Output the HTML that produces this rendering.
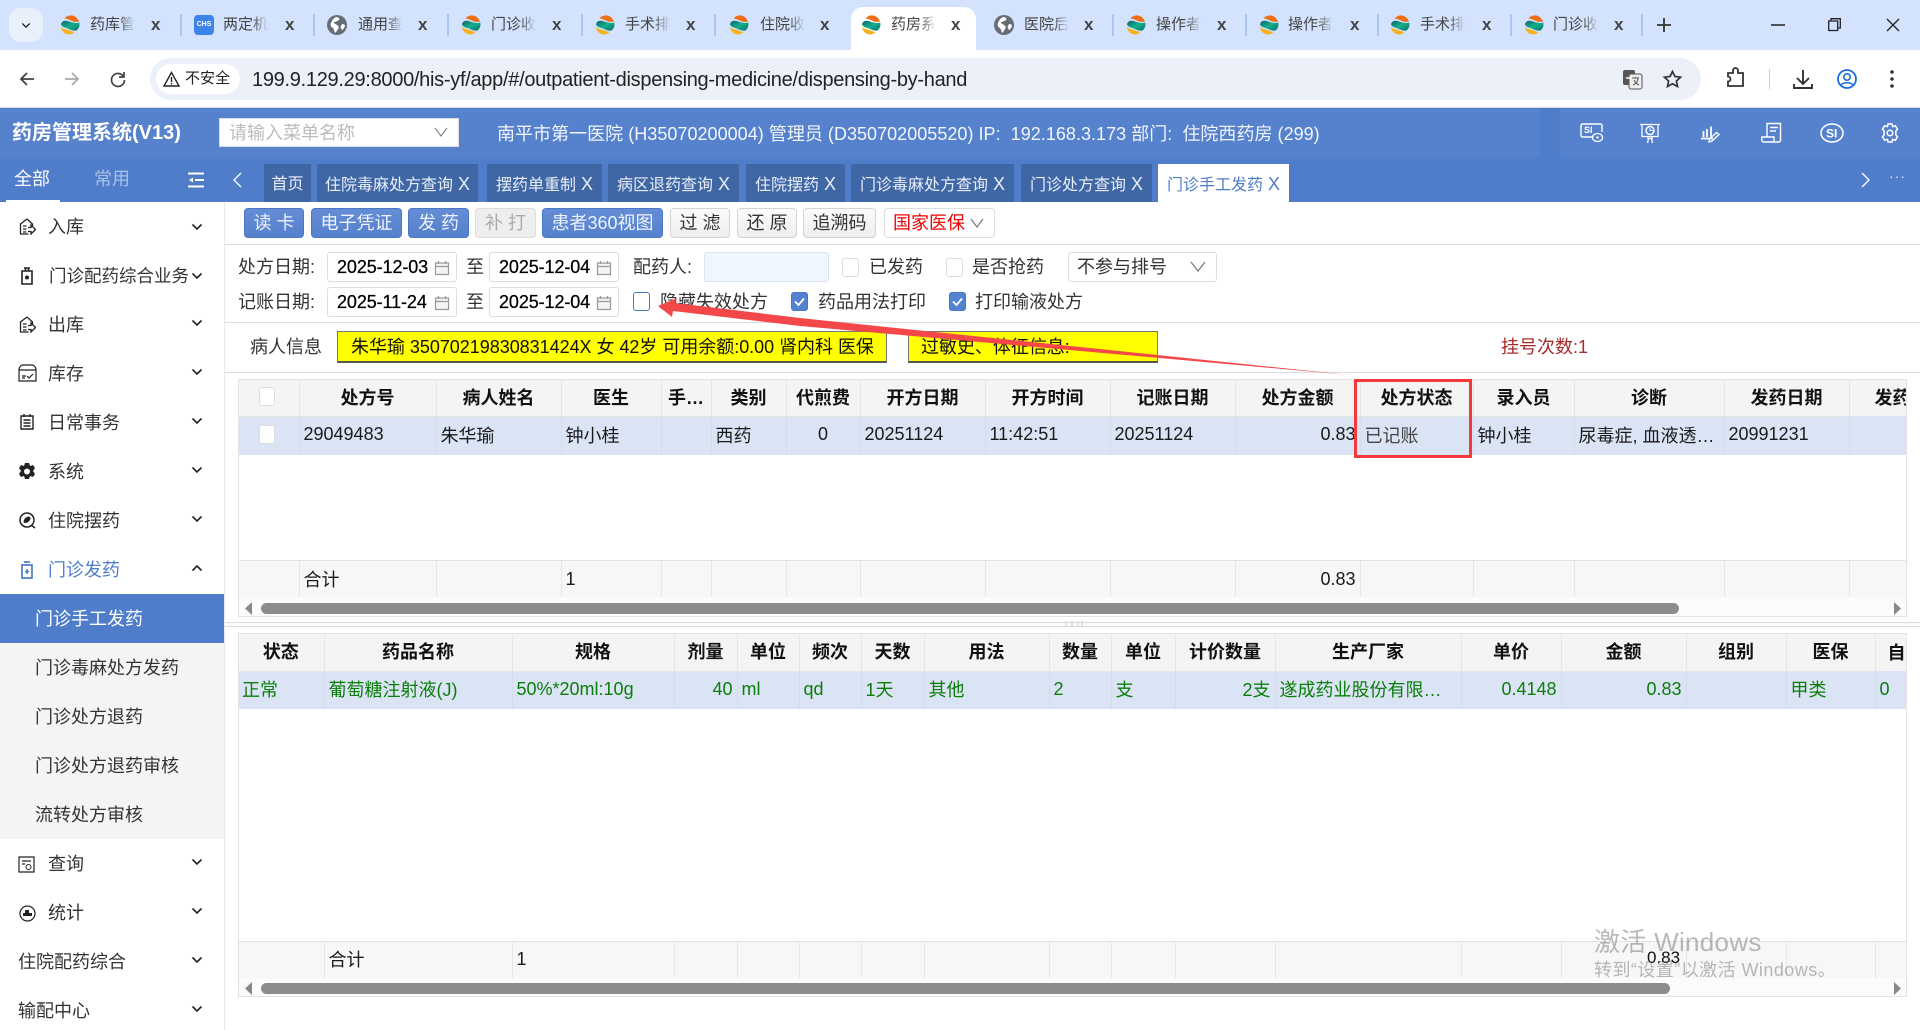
<!DOCTYPE html>
<html lang="zh-CN"><head><meta charset="utf-8"><title>药房管理系统</title>
<style>
*{box-sizing:border-box}
html,body{margin:0;width:1920px;height:1030px;overflow:hidden;background:#fff;font-family:"Liberation Sans","Noto Sans CJK SC",sans-serif;font-size:18px;color:#222}
.a{position:absolute;white-space:nowrap}
svg{display:block;overflow:visible}
.tt{font-size:15px;color:#444;width:45px;overflow:hidden;height:20px;line-height:20px;top:15px;-webkit-mask-image:linear-gradient(90deg,#000 65%,transparent)}
.tx{top:15px;font-size:17px;line-height:20px;color:#444;font-weight:700}
.sp{top:14px;width:2px;height:22px;background:#a9c6f3}
.pt{top:164px;height:38px;background:#4067a5;color:#e8eef8;font-size:16px;line-height:41px;text-align:center}
.pt i{font-style:normal;font-size:18px;margin-left:5px}
.m{left:48px;line-height:24px;height:24px;font-size:18px;color:#333}
.ch{left:191px}
.ic{left:18px}
.b{top:208px;height:30px;line-height:28px;text-align:center;border-radius:4px;font-size:18px}
.bb{background:linear-gradient(#648dd5,#5681cc);border:1px solid #4a78c6;color:#eef3fb}
.bg{background:linear-gradient(#fbfbfb,#eee);border:1px solid #d4d4d4;color:#333}
.bd{background:#eee;border:1px solid #ddd;color:#aaa}
.l{line-height:30px;height:30px;color:#333}
.d{height:30px;width:130px;border:1px solid #ddd;border-radius:3px;line-height:28px;padding-left:9px;color:#000;font-size:18px;letter-spacing:-.1px;-webkit-text-stroke:.25px #000;background:#fff}
.cal{position:absolute;right:6px;top:7px}
.cb{width:17px;height:19px;border:1px solid #ddd;border-radius:3px;background:#fff}
.cc{background:#5382cf;border-color:#4a78c6}
.y{top:331px;height:32px;background:#ff0;border:1px solid #777;border-bottom:2px solid #555;line-height:30px;color:#111;font-size:18px;padding-left:13px;letter-spacing:-.03px;overflow:hidden}
.box{border:1px solid #e3e3e3;overflow:hidden;background:#fff;left:238px;width:1669px}
table{border-collapse:collapse;table-layout:fixed;position:absolute;left:-1px;font-size:18px}
td,th{padding:0 4px;overflow:hidden;white-space:nowrap;border-right:1px solid #e6e6e6;text-overflow:ellipsis;font-weight:400;color:#1a1a1a}
th{background:#f4f4f4;font-weight:700;text-align:center;color:#111;border-bottom:1px solid #e6e6e6;padding-bottom:2px}
.r td{background:#dbe4f4;border-right-color:#d4dded;padding-bottom:2px}
.s td{background:#f7f7f7;border-top:1px solid #e2e2e2;border-bottom:1px solid #e2e2e2}
.s2 td{padding-bottom:2px}
.g td{color:#0a7d0a}
.R{text-align:right}.C{text-align:center}
th.last{text-align:left;border:0;text-overflow:clip}
.cbt{width:16px;margin-left:17px}
.bar{height:11px;background:#8c8c8c;border-radius:6px;left:22px}
.sb{background:#fbfbfb;left:0;width:1667px;height:19px}
</style></head><body>
<svg width="0" height="0" style="position:absolute"><defs>
<linearGradient id="tl" x1="0" y1="0" x2="1" y2="1"><stop offset="0" stop-color="#145f6a"/><stop offset=".5" stop-color="#12b08c"/><stop offset="1" stop-color="#0e6f70"/></linearGradient>
<symbol id="lg" viewBox="0 0 20 20"><path d="M4.500 3.500C8-1 16-1 19 6.500c-3 1-6 0-9-1.300C8 4.200 6 3.500 4.500 3.500z" fill="#ee6f18"/><path d="M1 9.500C1.500 6 5 5 8.500 6.300c4 1.500 7.500 2.200 10.700 1.200.9 3.500-.6 6.500-2.800 8-3 .6-5-.6-8-1.800C5.500 12.500 2.500 12.500 1 9.500z" fill="url(#tl)"/><path d="M.8 12c2 2 4.700 2 7.500 3 2.500 1 4.500 1.900 6.200 2C10.500 21.500 2.500 20 .8 12z" fill="#f5b21e"/></symbol>
<symbol id="gl" viewBox="0 0 20 20"><circle cx="10" cy="10" r="10" fill="#666d76"/><path d="M9 2c3 0 4 2 3 3-2 1-3 2-5 2-1 1 2 2 3 3 2 1 2 3 1 4-1 2-2 3-3 4-1-2-1-4-2-5-2-1-3-3-2-5 1-3 3-5 5-6zM15 9c2 0 3 1 3 2-1 2-2 4-3 4-1-2-2-3-1-4z" fill="#fff"/></symbol>
<symbol id="cv" viewBox="0 0 12 8"><path d="M1.500 1.500 6 6l4.500-4.500" fill="none" stroke="#222" stroke-width="1.600"/></symbol>
<symbol id="cal" viewBox="0 0 16 16"><path d="M1.500 3h13v11.500h-13z" fill="#f4f4f4" stroke="#999" stroke-width="1.200"/><path d="M1.500 6.500h13M4.500 1v3M11.500 1v3" fill="none" stroke="#999" stroke-width="1.200"/></symbol>
<symbol id="tk" viewBox="0 0 17 19"><path d="M4 9.500l3.500 3.500L13 6.500" fill="none" stroke="#fff" stroke-width="1.800"/></symbol>
<symbol id="hs" viewBox="0 0 18 17"><path d="M9 1 2.500 6v10h8M9 1l5.500 5v2M5 8h3.500M5 11h3.500M5 14h3.500" fill="none" stroke="#222" stroke-width="1.300"/><path d="M10 9.500h3V7l4.500 4.500L13 16v-2.500h-3" fill="#fff" stroke="#222" stroke-width="1.300"/></symbol>
</defs></svg>

<!-- browser tabs -->
<div class="a" style="left:0;top:0;width:1920px;height:50px;background:#d3e3fd"></div>
<div class="a" style="left:9px;top:8px;width:34px;height:34px;border-radius:12px;background:#e9f0fc"></div>
<svg class="a" style="left:21px;top:22px" width="10" height="7"><use href="#cv"/></svg>
<div class="a" style="left:851px;top:7px;width:125px;height:43px;background:#fff;border-radius:12px 12px 0 0"></div>

<svg class="a" style="left:60px;top:15px" width="20" height="20"><use href="#lg"/></svg><div class="a tt" style="left:90px">药库管理</div><div class="a tx" style="left:151px">x</div><div class="a sp" style="left:180px"></div>
<div class="a" style="left:194px;top:15px;width:20px;height:20px;background:#3c84ea;border-radius:4px;color:#fff;font:700 7px/20px 'Liberation Sans';text-align:center">CHS</div><div class="a tt" style="left:223px">两定机构</div><div class="a tx" style="left:285px">x</div><div class="a sp" style="left:313px"></div>
<svg class="a" style="left:327px;top:15px" width="20" height="20"><use href="#gl"/></svg><div class="a tt" style="left:358px">通用查询</div><div class="a tx" style="left:418px">x</div><div class="a sp" style="left:447px"></div>
<svg class="a" style="left:461px;top:15px" width="20" height="20"><use href="#lg"/></svg><div class="a tt" style="left:491px">门诊收费</div><div class="a tx" style="left:552px">x</div><div class="a sp" style="left:581px"></div>
<svg class="a" style="left:595px;top:15px" width="20" height="20"><use href="#lg"/></svg><div class="a tt" style="left:625px">手术排班</div><div class="a tx" style="left:686px">x</div><div class="a sp" style="left:714px"></div>
<svg class="a" style="left:729px;top:15px" width="20" height="20"><use href="#lg"/></svg><div class="a tt" style="left:760px">住院收费</div><div class="a tx" style="left:820px">x</div>
<svg class="a" style="left:861px;top:15px" width="20" height="20"><use href="#lg"/></svg><div class="a tt" style="left:891px">药房系统</div><div class="a tx" style="left:951px">x</div>
<svg class="a" style="left:994px;top:15px" width="20" height="20"><use href="#gl"/></svg><div class="a tt" style="left:1024px">医院后台</div><div class="a tx" style="left:1084px">x</div><div class="a sp" style="left:1112px"></div>
<svg class="a" style="left:1126px;top:15px" width="20" height="20"><use href="#lg"/></svg><div class="a tt" style="left:1156px">操作者站</div><div class="a tx" style="left:1217px">x</div><div class="a sp" style="left:1245px"></div>
<svg class="a" style="left:1259px;top:15px" width="20" height="20"><use href="#lg"/></svg><div class="a tt" style="left:1288px">操作者站</div><div class="a tx" style="left:1350px">x</div><div class="a sp" style="left:1377px"></div>
<svg class="a" style="left:1390px;top:15px" width="20" height="20"><use href="#lg"/></svg><div class="a tt" style="left:1420px">手术排班</div><div class="a tx" style="left:1482px">x</div><div class="a sp" style="left:1510px"></div>
<svg class="a" style="left:1524px;top:15px" width="20" height="20"><use href="#lg"/></svg><div class="a tt" style="left:1553px">门诊收费</div><div class="a tx" style="left:1614px">x</div><div class="a sp" style="left:1641px"></div>
<svg class="a" style="left:1657px;top:18px" width="14" height="14"><path d="M7 0v14M0 7h14" stroke="#333" stroke-width="1.800"/></svg>
<svg class="a" style="left:1771px;top:24px" width="14" height="2"><path d="M0 1h14" stroke="#222" stroke-width="1.500"/></svg>
<svg class="a" style="left:1828px;top:18px" width="13" height="13"><path d="M.7 3h9v9.500h-9zM3 3V.7h9.300V10H10" fill="none" stroke="#222" stroke-width="1.300"/></svg>
<svg class="a" style="left:1886px;top:18px" width="14" height="14"><path d="M1 1l12 12M13 1 1 13" stroke="#222" stroke-width="1.300"/></svg>

<!-- toolbar -->
<div class="a" style="left:0;top:50px;width:1920px;height:57px;background:#fff;border-radius:12px 12px 0 0"></div>
<div class="a" style="left:0;top:107px;width:1920px;height:1px;background:#d8d8d8"></div>
<svg class="a" style="left:19px;top:71px" width="16" height="16"><path d="M15 8H2M8 2 2 8l6 6" fill="none" stroke="#444" stroke-width="1.800"/></svg>
<svg class="a" style="left:64px;top:71px" width="16" height="16"><path d="M1 8h13M8 2l6 6-6 6" fill="none" stroke="#aaa" stroke-width="1.800"/></svg>
<svg class="a" style="left:110px;top:71px" width="16" height="16"><path d="M13.500 5.500A6.500 6.500 0 1 0 14.500 9M14 1v5H9" fill="none" stroke="#444" stroke-width="1.700"/></svg>
<div class="a" style="left:150px;top:58px;width:1551px;height:42px;border-radius:21px;background:#ebf0f9"></div>
<div class="a" style="left:156px;top:64px;width:84px;height:30px;border-radius:15px;background:#fff"></div>
<svg class="a" style="left:163px;top:71px" width="17" height="16"><path d="M8.500 1.500 16 15H1zM8.500 6v5M8.500 12v1.500" fill="none" stroke="#222" stroke-width="1.400"/></svg>
<div class="a" style="left:185px;top:68px;font-size:15px;line-height:22px;color:#222">不安全</div>
<div class="a" id="url" style="left:252px;top:67px;font-size:20px;line-height:26px;color:#222;letter-spacing:-.29px">199.9.129.29:8000/his-yf/app/#/outpatient-dispensing-medicine/dispensing-by-hand</div>
<svg class="a" style="left:1622px;top:69px" width="21" height="21"><rect x="1" y="1" width="12" height="15" rx="2" fill="#555"/><rect x="7" y="5" width="13" height="15" rx="2" fill="#eee" stroke="#555"/><path d="M10 9h7M13.500 8v1M11 16c3-1 5-4 5-7M12 11c1 2 3 4 5 5" stroke="#555" fill="none"/><path d="M4 9h5" stroke="#fff" stroke-width="1.500"/></svg>
<svg class="a" style="left:1663px;top:70px" width="19" height="18"><path d="M9.500 1.500l2.400 5 5.600.7-4.100 3.800 1.100 5.500-5-2.800-5 2.800 1.100-5.500L1.500 7.200l5.600-.7z" fill="none" stroke="#333" stroke-width="1.700"/></svg>
<svg class="a" style="left:1726px;top:68px" width="20" height="21"><path d="M2 5h5V2.500a2 2 0 0 1 5 0V5h5v13H2v-4.500a2.500 2.500 0 0 0 0-5z" fill="none" stroke="#333" stroke-width="1.800"/></svg>
<div class="a" style="left:1769px;top:69px;width:1px;height:20px;background:#c4d5ee"></div>
<svg class="a" style="left:1793px;top:69px" width="20" height="20"><path d="M10 1v13M4 9l6 6 6-6M1 15v4h18v-4" fill="none" stroke="#333" stroke-width="1.900"/></svg>
<svg class="a" style="left:1837px;top:69px" width="20" height="20"><circle cx="10" cy="10" r="9" fill="none" stroke="#1a6fd8" stroke-width="1.800"/><circle cx="10" cy="8" r="3.200" fill="none" stroke="#1a6fd8" stroke-width="1.600"/><path d="M4 16c2-3 10-3 12 0" fill="none" stroke="#1a6fd8" stroke-width="1.600"/></svg>
<svg class="a" style="left:1890px;top:70px" width="4" height="18"><circle cx="2" cy="2" r="1.800" fill="#333"/><circle cx="2" cy="9" r="1.800" fill="#333"/><circle cx="2" cy="16" r="1.800" fill="#333"/></svg>

<!-- app header -->
<div class="a" style="left:0;top:108px;width:1920px;height:49px;background:#5682cd"></div>
<div class="a" style="left:1540px;top:108px;width:20px;height:49px;background:#4f7dc9"></div>
<div class="a" style="left:12px;top:120px;font-size:20px;font-weight:700;color:#fff;line-height:26px">药房管理系统(V13)</div>
<div class="a" style="left:219px;top:118px;width:240px;height:29px;background:#fff;border:1px solid #ddd;font-size:18px;line-height:29px;color:#bbb;padding-left:9px">请输入菜单名称</div>
<svg class="a" style="left:434px;top:127px" width="14" height="10"><path d="M1 1l6 8 6-8" fill="none" stroke="#888" stroke-width="1.200"/></svg>
<div class="a" style="left:497px;top:121px;font-size:18px;line-height:26px;color:#f2f5fb;letter-spacing:.03px">南平市第一医院 (H35070200004) 管理员 (D350702005520) IP:&nbsp; 192.168.3.173 部门:&nbsp; 住院西药房 (299)</div>
<svg class="a" style="left:1580px;top:123px" width="24" height="21"><path d="M13 14H2.500A1.500 1.500 0 0 1 1 12.500v-10A1.500 1.500 0 0 1 2.500 1h18A1.500 1.500 0 0 1 22 2.500V9" fill="none" stroke="#fff" stroke-width="1.400"/><text x="4" y="10" font-size="9" font-weight="700" fill="#fff" font-family="Liberation Sans">SI</text><ellipse cx="17.500" cy="14.500" rx="5" ry="4" fill="#5682cd" stroke="#fff" stroke-width="1.300"/><circle cx="17.500" cy="14.500" r="1.200" fill="#fff"/></svg>
<svg class="a" style="left:1640px;top:123px" width="20" height="21"><path d="M0 1.500h20M2 1.500v12h16v-12M8 13.500h4v2H8zM7.500 20l1-4.500h3l1 4.500" fill="none" stroke="#fff" stroke-width="1.300"/><circle cx="10" cy="7.500" r="4" fill="none" stroke="#fff" stroke-width="1.500"/><path d="M10 5v2.500h3" fill="none" stroke="#fff"/></svg>
<svg class="a" style="left:1701px;top:125px" width="19" height="18"><path d="M2.500 6v6M6 4v8M10 1.500V12M0 13.500h12" fill="none" stroke="#fff" stroke-width="1.800"/><path d="M8 17l.5-3 7-6.500 2.500 2-7 6.500z" fill="none" stroke="#fff" stroke-width="1.300"/></svg>
<svg class="a" style="left:1761px;top:122px" width="20" height="21"><path d="M6 15V1.500h13.500V18c0 1.500-1 2-2 2H2.500C1.500 20 .8 19 .8 18v-3H13v5" fill="none" stroke="#fff" stroke-width="1.400"/><path d="M9 5.500h8M9 9h6" stroke="#fff" stroke-width="1.500"/></svg>
<svg class="a" style="left:1820px;top:123px" width="24" height="20"><ellipse cx="12" cy="10" rx="11" ry="9" fill="none" stroke="#fff" stroke-width="1.500"/><text x="6" y="14.500" font-size="12" font-weight="700" fill="#fff" font-family="Liberation Sans">SI</text></svg>
<svg class="a" style="left:1881px;top:123px" width="18" height="20"><path d="M7 1h4l.6 2.600 2.700-.8 2.200 3.400-1.700 2 .0 3.600 1.700 2-2.200 3.400-2.700-.8L11 19H7l-.6-2.600-2.700.8-2.200-3.400 1.700-2v-3.600l-1.700-2 2.200-3.400 2.700.8z" fill="none" stroke="#fff" stroke-width="1.500"/><circle cx="9" cy="10" r="2.800" fill="none" stroke="#fff" stroke-width="1.500"/></svg>

<!-- page tabs bar -->
<div class="a" style="left:0;top:157px;width:1920px;height:45px;background:#4f7dc9"></div>
<div class="a" style="left:14px;top:167px;font-size:18px;line-height:24px;color:#fff">全部</div>
<div class="a" style="left:94px;top:167px;font-size:18px;line-height:24px;color:#a8c1e8">常用</div>
<div class="a" style="left:6px;top:200px;width:54px;height:2px;background:#fff"></div>
<svg class="a" style="left:188px;top:172px" width="16" height="16"><path d="M0 1.500h16M7 8h9M0 14.500h16" stroke="#fff" stroke-width="2"/><path d="M5 5.500v5L1 8z" fill="#fff"/></svg>
<svg class="a" style="left:232px;top:172px" width="10" height="16"><path d="M9 1 2 8l7 7" fill="none" stroke="#fff" stroke-width="1.300"/></svg>
<div class="a pt" style="left:264px;width:47px">首页</div>
<div class="a pt" style="left:317px;width:161px">住院毒麻处方查询<i>X</i></div>
<div class="a pt" style="left:487px;width:115px">摆药单重制<i>X</i></div>
<div class="a pt" style="left:608px;width:131px">病区退药查询<i>X</i></div>
<div class="a pt" style="left:746px;width:99px">住院摆药<i>X</i></div>
<div class="a pt" style="left:851px;width:163px">门诊毒麻处方查询<i>X</i></div>
<div class="a pt" style="left:1021px;width:131px">门诊处方查询<i>X</i></div>
<div class="a pt" style="left:1158px;width:131px;background:#fff;color:#4f7dc9">门诊手工发药<i>X</i></div>
<svg class="a" style="left:1861px;top:172px" width="10" height="16"><path d="M1 1l7 7-7 7" fill="none" stroke="#fff" stroke-width="1.300"/></svg>
<div class="a" style="left:1889px;top:166px;font-size:14px;line-height:20px;color:#dfe8f6;letter-spacing:1px">···</div>

<!-- sidebar -->
<div class="a" style="left:0;top:202px;width:225px;height:828px;background:#fff;border-right:1px solid #e8e8e8"></div>
<div class="a" style="left:0;top:594px;width:224px;height:245px;background:#f4f4f4"></div>
<div class="a" style="left:0;top:594px;width:224px;height:49px;background:#4f7dc9"></div>

<svg class="a ic" style="top:218px" width="18" height="17"><use href="#hs"/></svg><div class="a m" style="top:215px">入库</div><svg class="a ch" style="top:223px" width="12" height="8"><use href="#cv"/></svg>
<svg class="a ic" style="top:267px;left:20px" width="14" height="18"><path d="M4 1h6M5.500 1v3M8.500 1v3M2 4h10v13H2z" fill="none" stroke="#222" stroke-width="1.600"/><circle cx="7" cy="10.500" r="2" fill="#222"/></svg><div class="a m" style="top:264px;left:49px;font-size:17.500px">门诊配药综合业务</div><svg class="a ch" style="top:272px" width="12" height="8"><use href="#cv"/></svg>
<svg class="a ic" style="top:316px" width="18" height="17"><use href="#hs"/></svg><div class="a m" style="top:313px">出库</div><svg class="a ch" style="top:319px" width="12" height="8"><use href="#cv"/></svg>
<svg class="a ic" style="top:364px" width="19" height="18"><path d="M1 6c0-3 2-5 4-5h9c2 0 4 2 4 5v11H1zM1 6h17M4 12h4M4 14h3M9 12l2 2 4-4" fill="none" stroke="#222" stroke-width="1.200"/></svg><div class="a m" style="top:362px">库存</div><svg class="a ch" style="top:368px" width="12" height="8"><use href="#cv"/></svg>
<svg class="a ic" style="top:414px;left:20px" width="14" height="16"><path d="M1 2h12v13H1zM4 0v3M10 0v3M3.500 6h7M3.500 9h7M3.500 12h7" fill="none" stroke="#222" stroke-width="1.400"/></svg><div class="a m" style="top:411px">日常事务</div><svg class="a ch" style="top:417px" width="12" height="8"><use href="#cv"/></svg>
<svg class="a ic" style="top:463px" width="18" height="17"><path d="M7 0h4l1 3 3-1 2 3-2 3 2 3-2 3-3-1-1 3H7l-1-3-3 1-2-3 2-3-2-3 2-3 3 1z" fill="#222"/><circle cx="9" cy="8.500" r="3" fill="#fff"/></svg><div class="a m" style="top:460px">系统</div><svg class="a ch" style="top:466px" width="12" height="8"><use href="#cv"/></svg>
<svg class="a ic" style="top:512px;left:19px" width="17" height="17"><circle cx="8" cy="8" r="7" fill="none" stroke="#222" stroke-width="1.500"/><path d="M4.500 10c0-3 3-5.500 5-5.500 2 0 2.500 2 1.500 3.500-1 1.500-3 3-4.500 3-1 0-2-.5-2-1z" fill="#222"/><path d="M12 13l4 3" stroke="#222" stroke-width="1.500"/></svg><div class="a m" style="top:509px">住院摆药</div><svg class="a ch" style="top:515px" width="12" height="8"><use href="#cv"/></svg>
<svg class="a ic" style="top:561px;left:20px" width="14" height="18"><path d="M4 1h6M2 4h10v13H2z" fill="none" stroke="#4f7dc9" stroke-width="1.700"/><path d="M7 8v5M5 10.500h4" stroke="#4f7dc9" stroke-width="1.500"/></svg><div class="a m" style="top:558px;color:#4f7dc9">门诊发药</div><svg class="a ch" style="top:564px;transform:scaleY(-1)" width="12" height="8"><use href="#cv"/></svg>
<div class="a m" style="top:607px;left:35px;color:#fff">门诊手工发药</div>
<div class="a m" style="top:656px;left:35px">门诊毒麻处方发药</div>
<div class="a m" style="top:705px;left:35px">门诊处方退药</div>
<div class="a m" style="top:754px;left:35px">门诊处方退药审核</div>
<div class="a m" style="top:803px;left:35px">流转处方审核</div>
<svg class="a ic" style="top:856px" width="17" height="17"><path d="M1 1h15v15H1zM4 5h9M4 8h3" fill="none" stroke="#222" stroke-width="1.200"/><circle cx="10.500" cy="11" r="2.500" fill="none" stroke="#222"/></svg><div class="a m" style="top:852px">查询</div><svg class="a ch" style="top:858px" width="12" height="8"><use href="#cv"/></svg>
<svg class="a ic" style="top:905px;left:19px" width="17" height="17"><circle cx="8.500" cy="8.500" r="7.500" fill="none" stroke="#222" stroke-width="1.200"/><path d="M4 11V8h2V5h4v3h3v3z" fill="#222"/></svg><div class="a m" style="top:901px">统计</div><svg class="a ch" style="top:907px" width="12" height="8"><use href="#cv"/></svg>
<div class="a m" style="top:950px;left:18px">住院配药综合</div><svg class="a ch" style="top:956px" width="12" height="8"><use href="#cv"/></svg>
<div class="a m" style="top:999px;left:18px">输配中心</div><svg class="a ch" style="top:1005px" width="12" height="8"><use href="#cv"/></svg>

<!-- action buttons -->
<div class="a b bb" style="left:244px;width:60px">读 卡</div>
<div class="a b bb" style="left:311px;width:91px">电子凭证</div>
<div class="a b bb" style="left:408px;width:61px">发 药</div>
<div class="a b bd" style="left:475px;width:61px">补 打</div>
<div class="a b bb" style="left:542px;width:121px">患者360视图</div>
<div class="a b bg" style="left:670px;width:60px">过 滤</div>
<div class="a b bg" style="left:737px;width:60px">还 原</div>
<div class="a b bg" style="left:803px;width:73px">追溯码</div>
<div class="a b" style="left:884px;width:111px;background:#fff;border:1px solid #ddd;color:#e00;text-align:left;padding-left:8px">国家医保</div>
<svg class="a" style="left:970px;top:218px" width="14" height="10"><path d="M1 1l6 8 6-8" fill="none" stroke="#777" stroke-width="1.200"/></svg>
<div class="a" style="left:225px;top:244px;width:1695px;height:1px;background:#ddd"></div>

<!-- filters -->
<div class="a l" style="left:238px;top:252px">处方日期:</div>
<div class="a d" style="left:327px;top:252px">2025-12-03<svg class="cal" width="16" height="16"><use href="#cal"/></svg></div>
<div class="a l" style="left:466px;top:252px">至</div>
<div class="a d" style="left:489px;top:252px">2025-12-04<svg class="cal" width="16" height="16"><use href="#cal"/></svg></div>
<div class="a l" style="left:633px;top:252px">配药人:</div>
<div class="a" style="left:704px;top:252px;width:125px;height:30px;background:#eff6ff;border:1px solid #dbe3ee;border-radius:3px"></div>
<div class="a cb" style="left:842px;top:258px"></div><div class="a l" style="left:869px;top:252px">已发药</div>
<div class="a cb" style="left:946px;top:258px"></div><div class="a l" style="left:972px;top:252px">是否抢药</div>
<div class="a" style="left:1068px;top:252px;width:149px;height:30px;border:1px solid #ddd;border-radius:3px;line-height:28px;padding-left:8px;color:#333">不参与排号</div>
<svg class="a" style="left:1190px;top:261px" width="16" height="11"><path d="M1 1l7 9 7-9" fill="none" stroke="#777" stroke-width="1.200"/></svg>
<div class="a l" style="left:238px;top:287px">记账日期:</div>
<div class="a d" style="left:327px;top:287px">2025-11-24<svg class="cal" width="16" height="16"><use href="#cal"/></svg></div>
<div class="a l" style="left:466px;top:287px">至</div>
<div class="a d" style="left:489px;top:287px">2025-12-04<svg class="cal" width="16" height="16"><use href="#cal"/></svg></div>
<div class="a cb" style="left:633px;top:292px;border-color:#4a78c6"></div><div class="a l" style="left:660px;top:287px">隐藏失效处方</div>
<div class="a cb cc" style="left:791px;top:292px"><svg style="position:absolute;left:-1px;top:-1px" width="17" height="19"><use href="#tk"/></svg></div><div class="a l" style="left:818px;top:287px">药品用法打印</div>
<div class="a cb cc" style="left:949px;top:292px"><svg style="position:absolute;left:-1px;top:-1px" width="17" height="19"><use href="#tk"/></svg></div><div class="a l" style="left:975px;top:287px">打印输液处方</div>
<div class="a" style="left:225px;top:322px;width:1695px;height:1px;background:#ddd"></div>

<!-- patient -->
<div class="a" style="left:250px;top:334px;line-height:26px;color:#333">病人信息</div>
<div class="a y" style="left:337px;width:550px">朱华瑜 35070219830831424X 女 42岁 可用余额:0.00 肾内科 医保</div>
<div class="a y" style="left:908px;width:250px;padding-left:12px">过敏史、体征信息:</div>
<div class="a" style="left:1501px;top:334px;line-height:26px;color:#a52a2a">挂号次数:1</div>
<div class="a" style="left:225px;top:372px;width:1695px;height:1px;background:#ddd"></div>

<!-- table 1 -->
<div class="a box" style="top:379px;height:238px">
<table style="top:0;width:1668px">
<colgroup><col style="width:61px"><col style="width:137px"><col style="width:125px"><col style="width:100px"><col style="width:50px"><col style="width:75px"><col style="width:74px"><col style="width:125px"><col style="width:125px"><col style="width:125px"><col style="width:125px"><col style="width:113px"><col style="width:101px"><col style="width:150px"><col style="width:125px"><col style="width:57px"></colgroup>
<tr style="height:36px"><th><div class="cb cbt"></div></th><th>处方号</th><th>病人姓名</th><th>医生</th><th>手…</th><th>类别</th><th>代煎费</th><th>开方日期</th><th>开方时间</th><th>记账日期</th><th>处方金额</th><th>处方状态</th><th>录入员</th><th>诊断</th><th>发药日期</th><th class="last" style="padding-left:25px">发药日期</th></tr>
<tr class="r" style="height:39px"><td><div class="cb cbt"></div></td><td>29049483</td><td>朱华瑜</td><td>钟小桂</td><td></td><td>西药</td><td class="C">0</td><td>20251124</td><td>11:42:51</td><td>20251124</td><td class="R">0.83</td><td style="color:#444">已记账</td><td>钟小桂</td><td>尿毒症, 血液透析状态</td><td>20991231</td><td style="border:0"></td></tr>
<tr style="height:105px"><td colspan="16" style="border:0"></td></tr>
<tr class="s" style="height:38px"><td></td><td>合计</td><td></td><td>1</td><td></td><td></td><td></td><td></td><td></td><td></td><td class="R">0.83</td><td></td><td></td><td></td><td></td><td style="border-right:0"></td></tr>
</table>
<div class="a sb" style="top:217px"></div>
<div class="a bar" style="top:223px;width:1418px"></div>
<svg class="a" style="left:6px;top:222px" width="8" height="13"><path d="M7 0v13L0 6.500z" fill="#888"/></svg>
<svg class="a" style="left:1655px;top:222px" width="8" height="13"><path d="M0 0v13l7-6.500z" fill="#888"/></svg>
</div>

<!-- splitter -->
<div class="a" style="left:225px;top:622px;width:1695px;height:5px;border-top:1px solid #ddd;border-bottom:1px solid #ddd;background:#fafafa"></div>
<svg class="a" style="left:1065px;top:621px" width="18" height="6"><path d="M1 0v6M7 0v6M13 0v6M17 0v6" stroke="#ccc"/></svg>

<!-- table 2 -->
<div class="a box" style="top:633px;height:364px">
<table style="top:0;width:1668px">
<colgroup><col style="width:86px"><col style="width:188px"><col style="width:162px"><col style="width:63px"><col style="width:62px"><col style="width:62px"><col style="width:63px"><col style="width:125px"><col style="width:62px"><col style="width:64px"><col style="width:100px"><col style="width:186px"><col style="width:100px"><col style="width:125px"><col style="width:100px"><col style="width:89px"><col style="width:32px"></colgroup>
<tr style="height:37px"><th>状态</th><th>药品名称</th><th>规格</th><th>剂量</th><th>单位</th><th>频次</th><th>天数</th><th>用法</th><th>数量</th><th>单位</th><th>计价数量</th><th>生产厂家</th><th>单价</th><th>金额</th><th>组别</th><th>医保</th><th class="last" style="padding-left:12px">自付比例</th></tr>
<tr class="r g" style="height:38px"><td>正常</td><td>葡萄糖注射液(J)</td><td>50%*20ml:10g</td><td class="R">40</td><td>ml</td><td>qd</td><td>1天</td><td>其他</td><td>2</td><td>支</td><td class="R">2支</td><td style="padding-right:2px">遂成药业股份有限公司制药</td><td class="R">0.4148</td><td class="R">0.83</td><td></td><td>甲类</td><td style="border:0">0</td></tr>
<tr style="height:232px"><td colspan="17" style="border:0"></td></tr>
<tr class="s s2" style="height:38px"><td></td><td>合计</td><td>1</td><td></td><td></td><td></td><td></td><td></td><td></td><td></td><td></td><td></td><td></td><td class="R"></td><td></td><td></td><td style="border-right:0"></td></tr>
</table>
<div class="a sb" style="top:344px"></div>
<div class="a bar" style="top:349px;width:1409px"></div>
<svg class="a" style="left:6px;top:348px" width="8" height="13"><path d="M7 0v13L0 6.500z" fill="#888"/></svg>
<svg class="a" style="left:1655px;top:348px" width="8" height="13"><path d="M0 0v13l7-6.500z" fill="#888"/></svg>
</div>
<div class="a" style="left:1647px;top:948px;font-size:17px;line-height:20px;color:#111">0.83</div>

<!-- annotations -->
<svg class="a" style="left:0;top:0" width="1920" height="1030">
<path d="M658 306 677 298 675 303 800 318 1350 375 800 326 673 311 672 317z" fill="#f4474a"/>
<rect x="1355.500" y="380.500" width="115" height="76" fill="none" stroke="#f23a3a" stroke-width="3"/>
</svg>
<div class="a" style="left:1594px;top:926px;font-size:26px;line-height:32px;color:rgba(90,90,90,.42);letter-spacing:.3px">激活 Windows</div>
<div class="a" style="left:1594px;top:959px;font-size:18px;line-height:22px;color:rgba(90,90,90,.42);letter-spacing:.45px">转到“设置”以激活 Windows。</div>
</body></html>
